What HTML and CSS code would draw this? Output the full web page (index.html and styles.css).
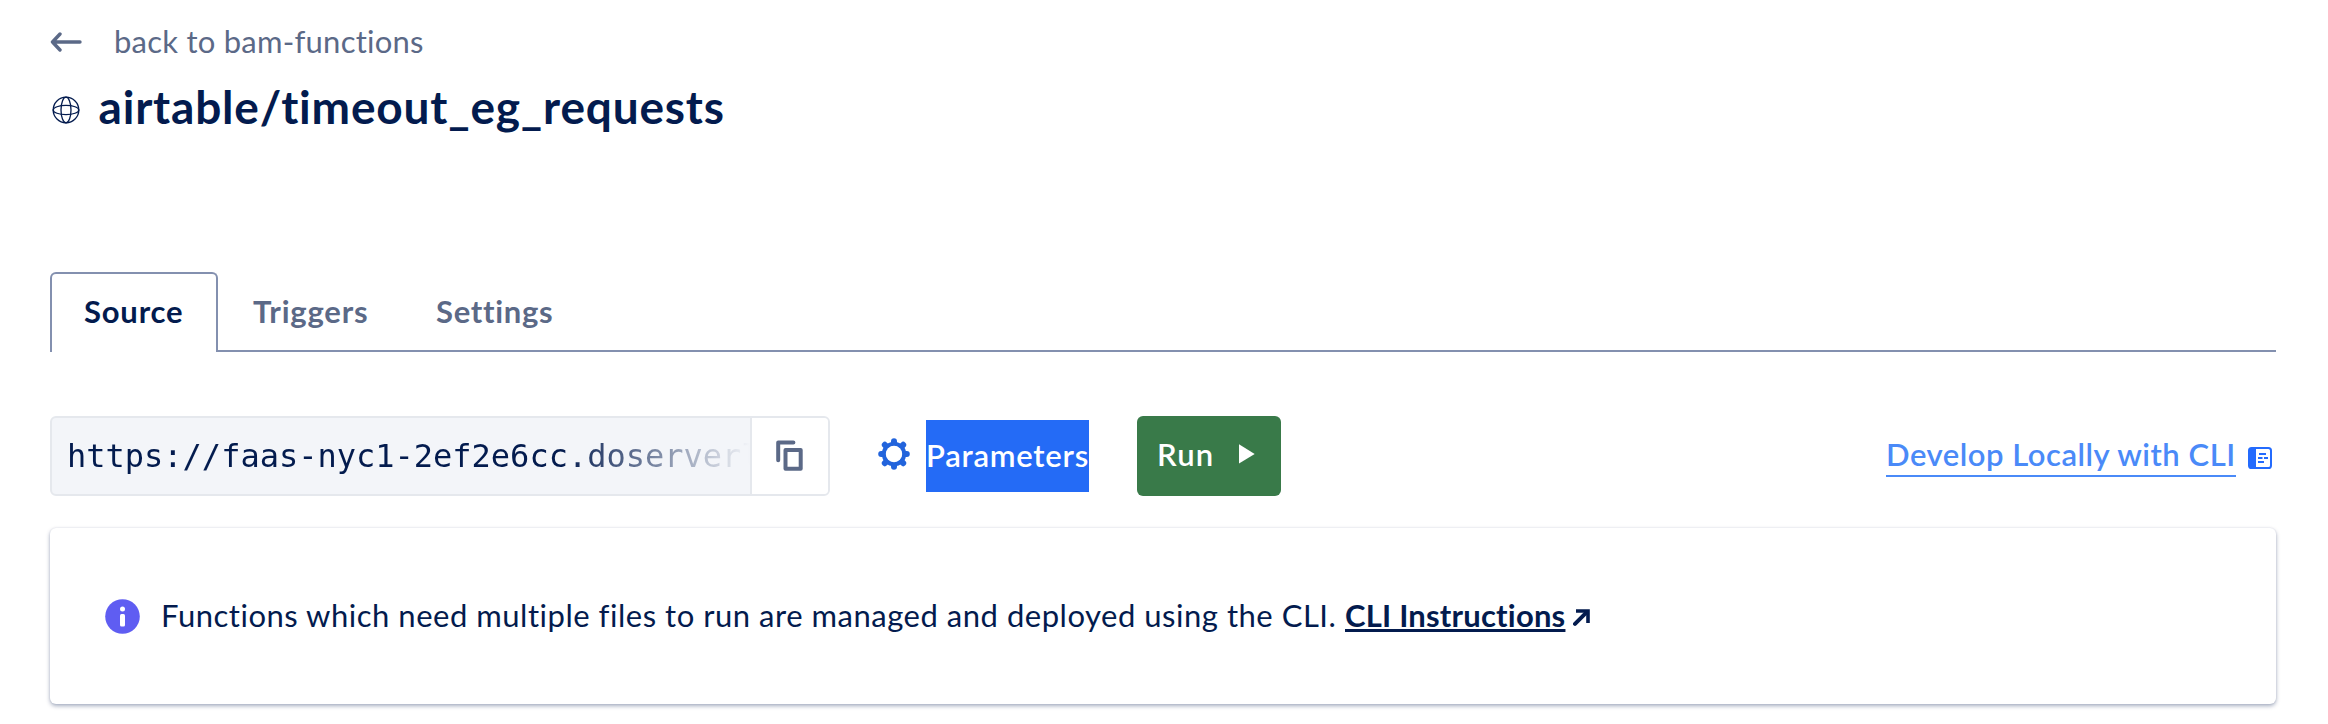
FILE: index.html
```html
<!DOCTYPE html>
<html lang="en">
<head>
<meta charset="utf-8">
<title>airtable/timeout_eg_requests</title>
<link rel="stylesheet" href="styles.css">
</head>
<body>
<main class="page">
  <a class="back">
    <svg class="back-icon" width="32" height="20" viewBox="0 0 32 20" fill="none" stroke="currentColor" stroke-width="3.4" stroke-linecap="round" stroke-linejoin="round"><path d="M30 10H2.500M10 2 2.500 10l7.500 8"/></svg>
    <span class="back-text">back to bam-functions</span>
  </a>
  <header class="title-row">
    <svg class="globe" width="28" height="28" viewBox="0 0 28 28" fill="none" stroke="currentColor" stroke-width="1.3"><circle cx="14" cy="14" r="12.8"/><ellipse cx="14" cy="14" rx="5" ry="12.8"/><ellipse cx="14" cy="14" rx="12.8" ry="4.6"/></svg>
    <h1 class="title">airtable/timeout_eg_requests</h1>
  </header>
  <nav class="tabs">
    <a class="tab tab-active">Source</a>
    <a class="tab tab-triggers">Triggers</a>
    <a class="tab tab-settings">Settings</a>
  </nav>
  <section class="toolbar">
    <div class="url-box">
      <div class="url">https://faas-nyc1-2ef2e6cc.doserverl</div>
      <button class="copy" aria-label="Copy">
        <svg width="28" height="32" viewBox="0 0 28 32" fill="none" stroke="currentColor" stroke-width="4" stroke-linejoin="round" stroke-linecap="round"><path d="M2.2 20.2V2.5h15.2"/><rect x="9.5" y="10" width="15.2" height="18.7"/></svg>
      </button>
    </div>
    <a class="params">
      <svg class="gear" width="32" height="32" viewBox="-16 -16 32 32"><circle r="10" fill="none" stroke="currentColor" stroke-width="4.4"/><path d="M0-12.8V-11M0 11v1.8M-12.8 0H-11M11 0h1.8M-9.2-9.2l1 1M8.2 8.2l1 1M-9.2 9.2l1-1M8.2-8.2l1-1" fill="none" stroke="currentColor" stroke-width="6" stroke-linecap="round"/><circle r="8.2" fill="#fff"/></svg>
      <span class="params-text">Parameters</span>
    </a>
    <button class="run"><span>Run</span><svg width="16" height="20" viewBox="0 0 16 20"><path d="M0 .3 15.7 10 0 19.5z" fill="#fff"/></svg></button>
    <a class="cli">
      <span class="cli-text">Develop Locally with CLI</span>
      <svg width="24" height="22" viewBox="0 0 24 22"><rect x="1" y="1" width="22" height="20" rx="2.6" fill="#fff" stroke="#246bfd" stroke-width="2"/><path d="M1 3.500A2.500 2.500 0 0 1 3.500 1H8v20H3.500A2.500 2.500 0 0 1 1 18.500z" fill="#246bfd"/><path d="M11 7h7M10 11h4.500M16 11h4M10 15h6" stroke="#246bfd" stroke-width="2"/></svg>
    </a>
  </section>
  <section class="card">
    <svg class="info" width="35" height="35" viewBox="0 0 35 35"><circle cx="17.500" cy="17.500" r="17.300" fill="#5f5df2"/><circle cx="17.500" cy="10" r="2.500" fill="#fff"/><rect x="15" y="15" width="5" height="12.500" rx="1.500" fill="#fff"/></svg>
    <p class="message"><span class="message-text">Functions which need multiple files to run are managed and deployed using the CLI.</span><a class="instructions">CLI Instructions</a><svg class="arrow" width="17" height="17" viewBox="0 0 17 17" fill="none" stroke="currentColor"><path d="M2 14.800 13 3.800" stroke-width="4" stroke-linecap="round"/><path d="M3 2h12v12" stroke-width="3.600"/></svg></p>
  </section>
</main>
</body>
</html>
```
FILE: styles.css
```css
* { box-sizing: border-box; }
body {
  margin: 0;
  background: #fff;
  color: #031b4e;
  font-family: Lato, "Liberation Sans", sans-serif;
  font-size: 31px;
}
svg { display: block; flex: none; }
button { border: 0; font: inherit; padding: 0; }
.page { height: 724px; padding: 21px 52px 0 50px; }

.back { display: flex; align-items: center; height: 40px; color: #5b6987; }
.back-icon { margin-top: 2px; }
.back-text { margin-left: 32px; letter-spacing: .24px; }

.title-row { display: flex; align-items: center; height: 60px; margin-top: 16px; }
.globe { margin: 6px 0 0 2px; }
.title { margin: 0 0 0 18.5px; font-size: 46px; font-weight: 700; line-height: 60px; letter-spacing: .8px; }

.tabs { display: flex; height: 80px; margin-top: 135px; font-weight: 700; line-height: 78px; }
.tabs::after { content: ""; flex: 1; border-bottom: 2px solid #8390af; }
.tab { color: #5b6987; border-bottom: 2px solid #8390af; letter-spacing: .8px; }
.tab-active {
  width: 168px;
  padding-left: 32px;
  color: #031b4e;
  border: 2px solid #8390af;
  border-bottom: 0;
  border-radius: 6px 6px 0 0;
  line-height: 74px;
}
.tab-triggers { width: 184px; padding-left: 35px; }
.tab-settings { width: 150px; padding-left: 34px; letter-spacing: .7px; }

.toolbar { display: flex; align-items: center; height: 80px; margin: 64px 0 32px; }
.url-box { display: flex; width: 780px; height: 80px; border: 2px solid #e5e8ed; border-radius: 6px; background: #f3f5f9; overflow: hidden; }
.url {
  width: 698px;
  padding-left: 15px;
  overflow: hidden;
  white-space: nowrap;
  font: 32px/76px "DejaVu Sans Mono", monospace;
  color: transparent;
  background: linear-gradient(90deg, #031b4e 510px, rgba(3, 27, 78, 0) 698px);
  -webkit-background-clip: text;
  background-clip: text;
}
.copy { display: flex; justify-content: center; align-items: center; width: 78px; border-left: 2px solid #e5e8ed; background: #fff; color: #5b6987; }

.params { display: flex; align-items: center; margin-left: 48px; }
.gear { color: #2264dc; margin-top: -4px; }
.params-text { margin-left: 16px; width: 163px; height: 72px; line-height: 70px; background: #246bf6; color: #fff; font-weight: 600; letter-spacing: .75px; }
.run { display: flex; align-items: center; width: 144px; height: 80px; margin-left: 48px; padding: 0 0 4px 20px; border-radius: 6px; background: #397a49; color: #fff; font-weight: 600; letter-spacing: 1.200px; }
.run svg { margin-left: 25px; }
.cli { display: flex; align-items: center; margin: -1px 4px 0 auto; color: #4a8af8; font-weight: 600; }
.cli-text { width: 350px; height: 43px; line-height: 41px; white-space: nowrap; border-bottom: 2px solid #4a8af8; letter-spacing: .52px; }
.cli svg { margin: 5px 0 0 12px; }

.card {
  display: flex;
  align-items: center;
  height: 176px;
  padding: 0 55px;
  border-radius: 6px;
  background: #fff;
  box-shadow: 0 2px 4px rgba(3, 27, 78, .35), 0 0 2px rgba(3, 27, 78, .1);
}
.message { display: flex; align-items: center; margin: -3px 0 0 21px; white-space: nowrap; }
.message-text { width: 1184px; letter-spacing: .52px; }
.instructions { font-weight: 700; letter-spacing: .2px; text-decoration: underline; text-decoration-thickness: 3px; text-underline-offset: 2px; text-decoration-skip-ink: none; }
.arrow { margin: 6px 0 0 8px; }
```
